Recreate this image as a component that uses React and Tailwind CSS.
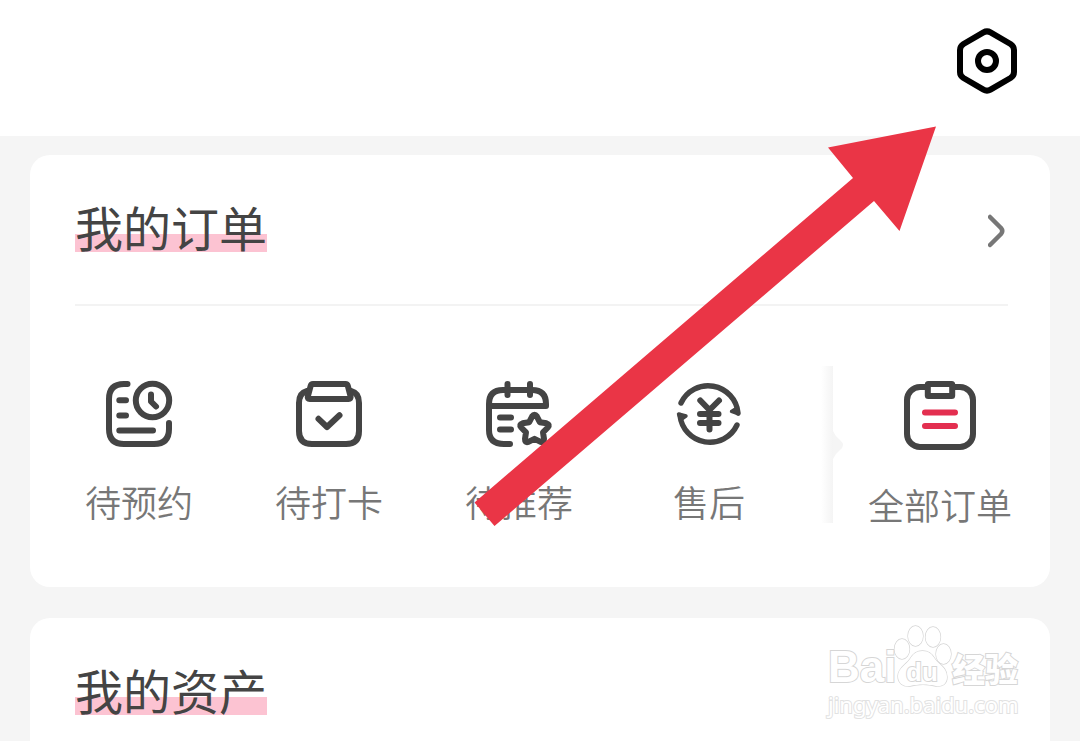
import React from "react";

function IconSvg({ width = 66, height = 66, children }) {
  return (
    <svg
      className="overflow-visible"
      width={width}
      height={height}
      viewBox={`0 0 ${width} ${height}`}
      fill="none"
      stroke="#444444"
      strokeWidth="6"
      strokeLinecap="round"
      strokeLinejoin="round"
      aria-hidden="true"
    >
      {children}
    </svg>
  );
}

function SettingsIcon() {
  return (
    <svg width="60" height="66" viewBox="0 0 60 66" fill="none" stroke="#000000" strokeWidth="6" strokeLinejoin="round" aria-hidden="true">
      <path d="M26.5 4.4 Q30 2.4 33.5 4.4 L53.5 16 Q57 18.2 57 22 V44 Q57 47.8 53.5 50 L33.5 61.6 Q30 63.6 26.5 61.6 L6.5 50 Q3 47.8 3 44 V22 Q3 18.2 6.5 16 Z" />
      <circle cx="30" cy="33" r="9" />
    </svg>
  );
}

function ReserveIcon() {
  return (
    <IconSvg>
      <path d="M21.5 3 H18 Q3 3 3 18 V48 Q3 63 18 63 H48 Q63 63 63 48 V42" />
      <circle cx="46.5" cy="19.5" r="16.7" />
      <path d="M45 13.5 V20.5 L50 25.5" />
      <path d="M13.3 19.3 H20 M13.3 34.5 H20 M13.3 49.5 H47" />
    </IconSvg>
  );
}

function CheckInIcon() {
  return (
    <IconSvg>
      <path d="M11 10 Q3 12 3 22 V50 Q3 63 16 63 H50 Q63 63 63 50 V22 Q63 12 55 10" />
      <path d="M17 2.9 H49.5 Q51.3 2.9 51.8 4.7 L54.6 15.5 Q55 17.9 52.6 17.9 H13.7 Q11.3 17.9 11.8 15.5 L14.7 4.7 Q15.2 2.9 17 2.9 Z" />
      <path d="M22.5 37.8 L31 46 L43.5 34.2" />
    </IconSvg>
  );
}

function RecommendIcon() {
  return (
    <IconSvg>
      <path d="M24 63 H18 Q3 63 3 49 V23 Q3 9 17 9 H46 Q60 9 60 23 V25 H3" />
      <path d="M21.5 3 V14 M44 3 V14" />
      <path d="M14 36.5 H25 M14 48.5 H25" />
      <path d="M46.2 35.3 Q48.5 32 50.8 35.3 L53.8 41.2 L60.5 42.3 Q64.2 43.5 61.8 46.5 L57 51.3 L58 58 Q58.2 62 54.6 60.9 L48.5 57.8 L42.4 60.9 Q38.8 62 39 58 L40 51.3 L35.2 46.5 Q32.8 43.5 36.5 42.3 L43.2 41.2 Z" />
    </IconSvg>
  );
}

function AfterSaleIcon() {
  return (
    <IconSvg>
      <path strokeWidth="5.4" d="M5 22 A30 30 0 0 1 62 32" />
      <path strokeWidth="5.4" d="M61 44 A30 30 0 0 1 4 34.5" />
      <path fill="#444444" stroke="#444444" strokeWidth="3.4" d="M55.5 30.5 L61 27 L62.5 33 Z M2.5 33 L10 35 L5 38.5 Z" />
      <path d="M24.3 19.5 L33.5 29 L43 19.5 M33.5 29 V48.5 M24 33 H42.5 M24 42 H42.5" />
    </IconSvg>
  );
}

function AllOrdersIcon() {
  return (
    <IconSvg width={72} height={69}>
      <rect x="3" y="6" width="66" height="60" rx="13" />
      <rect x="23.8" y="3" width="24.4" height="12" rx="0.5" fill="#ffffff" />
      <path stroke="#e32f50" d="M21 31.5 H51 M21 45 H51" />
    </IconSvg>
  );
}

function SectionTitle({ children }) {
  return (
    <h2 className="bg-linear-to-t from-[#fcc3d2] from-[18px] to-transparent to-[18px] pb-1.5 text-5xl leading-10 text-[#444]">
      {children}
    </h2>
  );
}

function OrderLink({ icon, label }) {
  return (
    <a href="#" className="flex flex-col items-center gap-[34px] text-4xl leading-10 font-[350] whitespace-nowrap text-[#777]">
      {icon}
      <span>{label}</span>
    </a>
  );
}

const orderStates = [
  { label: "待预约", icon: <ReserveIcon /> },
  { label: "待打卡", icon: <CheckInIcon /> },
  { label: "待推荐", icon: <RecommendIcon /> },
  { label: "售后", icon: <AfterSaleIcon /> },
];

function Divider() {
  return (
    <div className="flex w-6 items-center self-stretch pt-[60px] pb-16" aria-hidden="true">
      <div className="h-full w-3 bg-linear-to-r from-white to-[#f4f4f4]" />
      <svg width="12" height="28" viewBox="0 0 12 28">
        <path d="M0 0 Q2 5 7 9 Q13 14 7 19 Q2 23 0 28 Z" fill="#f5f5f5" />
      </svg>
    </div>
  );
}

function Arrow() {
  return (
    <svg className="pointer-events-none absolute top-[126px] left-[474px]" width="464" height="402" viewBox="474 126 464 402" aria-hidden="true">
      <path d="M936 126.5 L899.5 231 L874 201 L494.5 526 L474.5 502.5 L853 178 L828 147.5 Z" fill="#ea3546" />
    </svg>
  );
}

function Watermark() {
  return (
    <div className="pointer-events-none absolute top-[624px] right-[58px] w-[194px] text-white [-webkit-text-stroke:2px_#d6d6d6] [paint-order:stroke]">
      <div className="flex h-[64px] items-end">
        <span className="w-[66px] font-['Liberation_Sans'] text-[44px] leading-[42px] font-bold">Bai</span>
        <div className="relative h-[64px] w-[58px]">
          <svg className="overflow-visible" width="58" height="64" viewBox="0 0 58 64" fill="#ffffff" stroke="#d4d4d4" strokeWidth="1.3" aria-hidden="true">
            <ellipse cx="8" cy="25" rx="7.5" ry="10" />
            <ellipse cx="21.5" cy="12" rx="7.5" ry="10" />
            <ellipse cx="39" cy="13" rx="7.5" ry="10" />
            <ellipse cx="49.5" cy="30" rx="7.5" ry="10" />
            <path d="M28.5 27 C35 27 38 30 41 35 C44 40 53 43 53 53 C53 60 48 63 42 62 C34 60 24 60 16 62 C9 63 4 59 4 52 C4 44 13 40 16 35 C19 30 22 27 28.5 27 Z" />
          </svg>
          <span className="absolute top-9 left-3 font-['Liberation_Sans'] text-[26px] leading-6 font-bold">du</span>
        </div>
        <span className="pb-1 text-[33px] leading-8 font-black">经验</span>
      </div>
      <div className="pt-1 font-['Noto_Sans'] text-[22px] leading-6 [-webkit-text-stroke:2px_#e2e2e2]">jingyan.baidu.com</div>
    </div>
  );
}

export default function App() {
  return (
    <div className="relative flex h-screen flex-col overflow-hidden bg-[#f5f5f5] font-['Noto_Sans_CJK_SC',sans-serif]">
      <header className="flex h-[136px] shrink-0 items-start justify-end bg-white px-[63px] pt-7">
        <button type="button" aria-label="设置">
          <SettingsIcon />
        </button>
      </header>

      <main className="flex flex-1 flex-col gap-[31px] px-[30px] pt-[19px]">
        <section className="shrink-0 rounded-[20px] bg-white">
          <div className="mr-[42px] ml-[45px] flex h-[151px] items-center justify-between border-b-2 border-[#f3f3f3] pb-0.5">
            <SectionTitle>我的订单</SectionTitle>
            <a href="#" aria-label="查看全部订单" className="pt-1">
              <svg width="20" height="36" viewBox="0 0 20 36" fill="none" stroke="#777777" strokeWidth="4.5" strokeLinecap="round" strokeLinejoin="round" aria-hidden="true">
                <path d="M2 4 L13 15 Q15.5 18 13 21 L2 32" />
              </svg>
            </a>
          </div>
          <div className="flex h-[281px] items-start pr-[15px] pl-[14px]">
            <nav className="mr-[17px] grid flex-1 grid-cols-4 pt-[75px]">
              {orderStates.map((item) => (
                <OrderLink key={item.label} icon={item.icon} label={item.label} />
              ))}
            </nav>
            <Divider />
            <div className="w-[190px] pt-[75px]">
              <OrderLink icon={<AllOrdersIcon />} label="全部订单" />
            </div>
          </div>
        </section>

        <section className="flex-1 rounded-t-[20px] bg-white">
          <div className="mr-[42px] ml-[45px] flex h-[151px] items-center pb-1">
            <SectionTitle>我的资产</SectionTitle>
          </div>
        </section>
      </main>

      <Arrow />
      <Watermark />
    </div>
  );
}
